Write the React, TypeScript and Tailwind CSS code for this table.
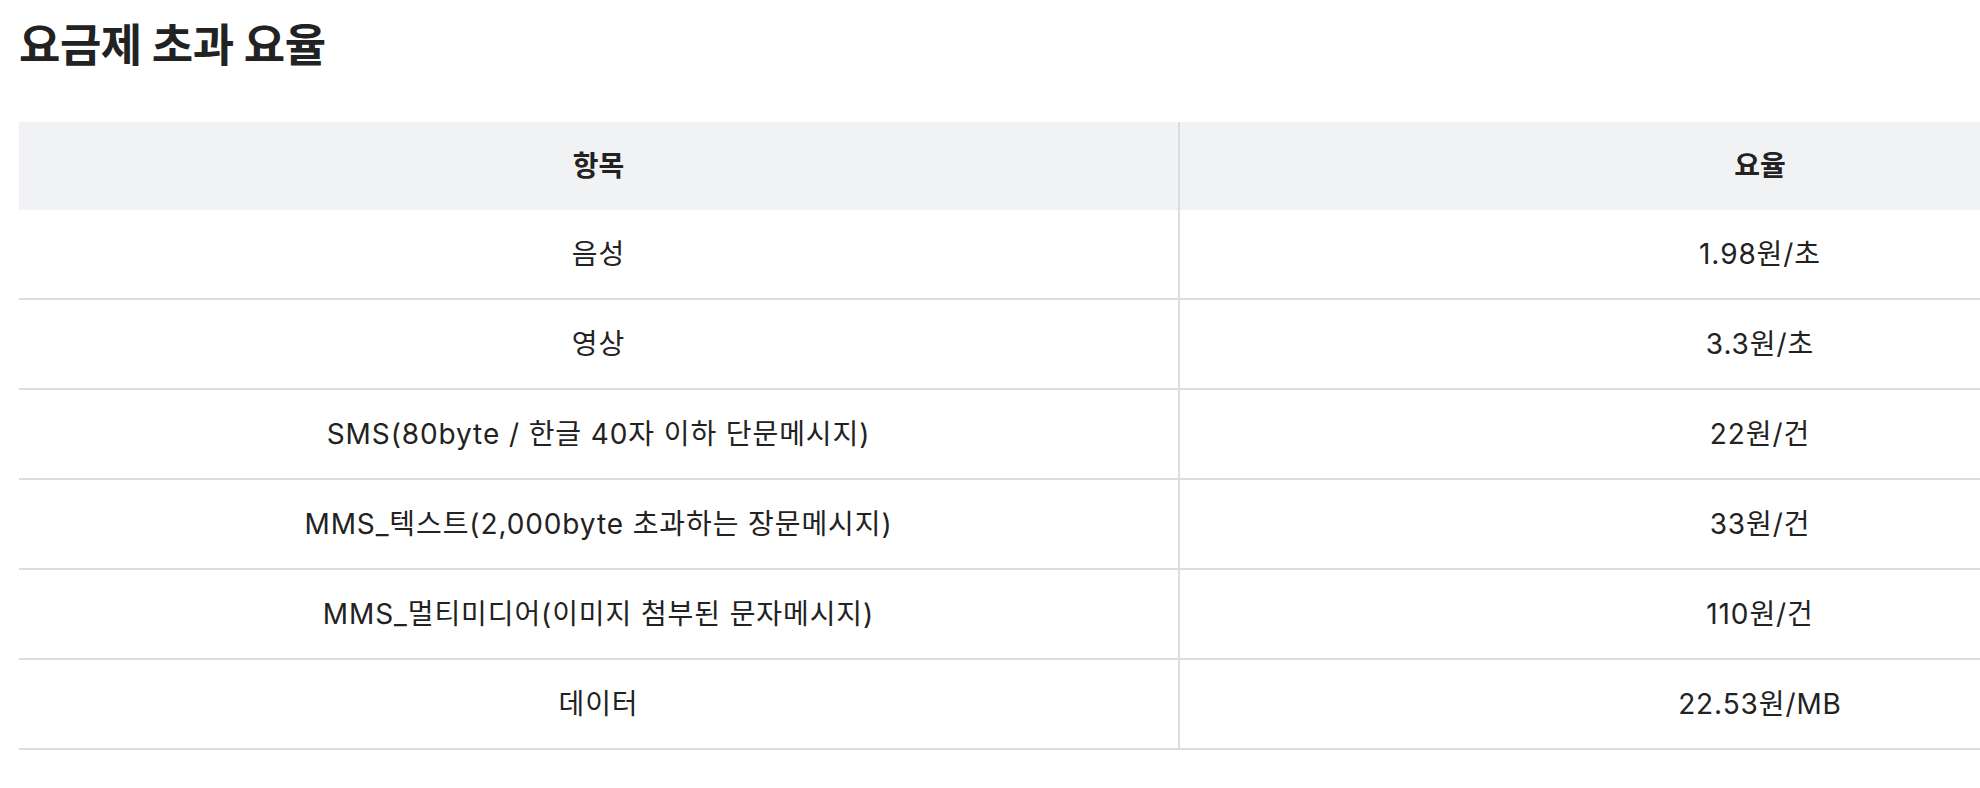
import React from "react";

const rows: [string, string][] = [
  ["음성", "1.98원/초"],
  ["영상", "3.3원/초"],
  ["SMS(80byte / 한글 40자 이하 단문메시지)", "22원/건"],
  ["MMS_텍스트(2,000byte 초과하는 장문메시지)", "33원/건"],
  ["MMS_멀티미디어(이미지 첨부된 문자메시지)", "110원/건"],
  ["데이터", "22.53원/MB"],
];

export default function App() {
  return (
    <div
      className="w-full min-h-[788px] overflow-hidden bg-white text-[#222222]"
      style={{ fontFamily: 'Inter, "Noto Sans CJK KR", "Noto Sans", sans-serif' }}
    >
      <div className="pl-[19px] pt-[17px]">
        <h1 className="text-[45px] font-bold leading-[58px] tracking-[-0.5px]">요금제 초과 요율</h1>
        <div className="mt-[47px] w-[2321px]">
          <div className="flex h-[88px] bg-[#f1f2f4] text-[28px] font-bold">
            <div className="flex w-[1159px] items-center justify-center">항목</div>
            <div className="flex w-[1162px] items-center justify-center border-l-2 border-[#dddddd]">요율</div>
          </div>
          {rows.map(([a, b]) => (
            <div key={a} className="flex h-[90px] border-b-2 border-[#dddddd] text-[28px] font-normal tracking-[0.9px]">
              <div className="flex w-[1159px] items-center justify-center">{a}</div>
              <div className="flex w-[1162px] items-center justify-center border-l-2 border-[#dddddd]">{b}</div>
            </div>
          ))}
        </div>
      </div>
    </div>
  );
}
